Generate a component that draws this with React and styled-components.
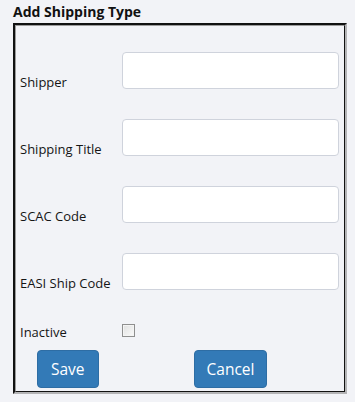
import React from 'react';
import styled, { createGlobalStyle } from 'styled-components';

const Global = createGlobalStyle`
  body {
    margin: 0;
    background: #f2f3f7;
    font-family: "Open Sans", "Liberation Sans", sans-serif;
    color: #151515;
  }
`;

const Page = styled.div`
  padding: 3px 8px 10px 13px;
`;

const Title = styled.h3`
  margin: 0 0 3px;
  font-size: 14px;
  font-weight: 700;
  line-height: 17px;
  color: #111;
`;

// outer edge: dark top/left, grey shadow on right/bottom
const Frame = styled.div`
  width: 330px;
  border-style: solid;
  border-width: 2px;
  border-color: #111 #b4b4b6 #b4b4b6 #111;
`;

const Inner = styled.div`
  border-style: solid;
  border-width: 1px;
  border-color: #9c9c9c #111 #111 #9c9c9c;
  background: #f2f3f7;
  padding: 26px 5px 3px 4px;
`;

const Grid = styled.div`
  display: grid;
  grid-template-columns: 102px 217px;
  align-items: end;
`;

const Label = styled.label`
  font-size: 13px;
  line-height: 16px;
  margin-bottom: -1px;
  margin-top: ${p => p.gap || 0}px;
`;

const Field = styled.input`
  box-sizing: border-box;
  height: 37px;
  width: 100%;
  margin-top: ${p => p.gap || 0}px;
  border: 1px solid #cfd3dc;
  border-radius: 4px;
  background: #fff;
  outline: none;
`;

const Check = styled.span`
  box-sizing: border-box;
  display: block;
  width: 13px;
  height: 13px;
  margin: 34px 0 2px;
  border: 1px solid #8f8f8f;
  background: linear-gradient(135deg, #e0e0e0, #fafafa);
  box-shadow: inset 0 0 0 1px #f4f4f4;
`;

const ButtonCell = styled.div`
  display: flex;
  justify-content: ${p => (p.start ? 'flex-start' : 'center')};
  padding: 11px 0 0 ${p => (p.start ? 17 : 0)}px;
`;

const Button = styled.button`
  height: 38px;
  padding: 0 ${p => p.pad}px;
  background: #337ab7;
  border: 1px solid #2e6da4;
  border-radius: 4px;
  color: #fff;
  font-family: "Open Sans", "Liberation Sans", sans-serif;
  font-size: 15.5px;
`;

const fields = ['Shipper', 'Shipping Title', 'SCAC Code', 'EASI Ship Code'];

export default function App() {
  return (
    <Page>
      <Global />
      <Title>Add Shipping Type</Title>
      <Frame>
        <Inner>
          <Grid>
            {fields.map((f, i) => (
              <React.Fragment key={f}>
                <Label gap={i ? 30 : 0}>{f}</Label>
                <Field gap={i ? 30 : 0} />
              </React.Fragment>
            ))}
            <Label>Inactive</Label>
            <div><Check /></div>
            <ButtonCell start><Button pad={13}>Save</Button></ButtonCell>
            <ButtonCell><Button pad={12}>Cancel</Button></ButtonCell>
          </Grid>
        </Inner>
      </Frame>
    </Page>
  );
}
